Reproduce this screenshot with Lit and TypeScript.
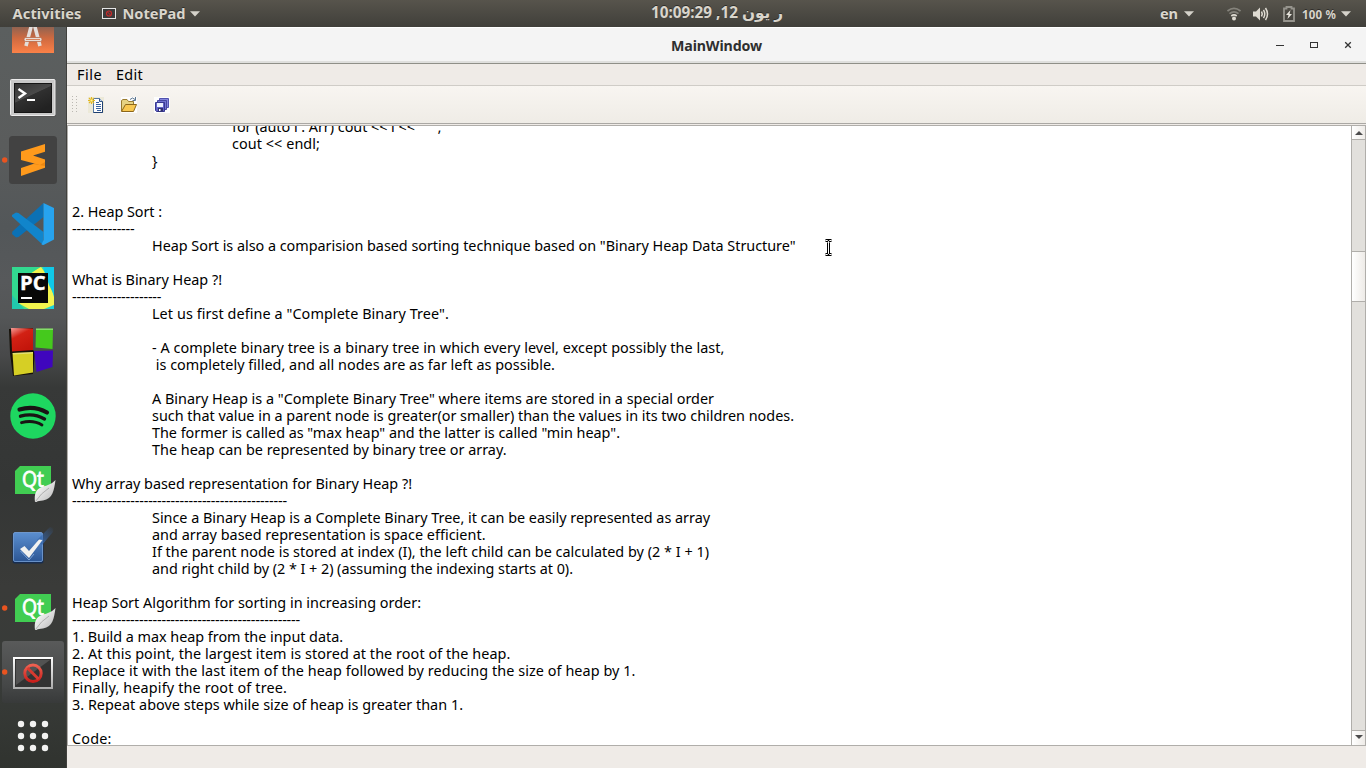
import { LitElement, html, css, svg } from "lit";
import { customElement, property } from "lit/decorators.js";
import { classMap } from "lit/directives/class-map.js";

const ctx = document.createElement("canvas").getContext("2d")!;

/** A single run of text whose tracking is computed so it fills `width` pixels. */
@customElement("fit-text")
class FitText extends LitElement {
  @property() text = "";
  @property({ type: Number }) width = 0;
  @property() font = '14.4px "Noto Sans"';
  static styles = css`
    :host { display: block; white-space: pre; }
    span { display: inline-block; font-family: "Noto Sans", "DejaVu Sans", sans-serif; }
  `;
  render() {
    ctx.font = this.font + ', "DejaVu Sans", sans-serif';
    const natural = ctx.measureText(this.text).width;
    const gap = this.width ? (this.width - natural) / this.text.length : 0;
    return html`<span style="font:${this.font}, 'DejaVu Sans', sans-serif;line-height:inherit;letter-spacing:${gap.toFixed(3)}px">${this.text}</span>`;
  }
}

type Line = [indent: number, text: string, width: number];

const lines: Line[] = [
  [2, 'for (auto i : Arr) cout << i << " " ;', 209.5],
  [2, "cout << endl;", 88],
  [1, "}", 5],
  [0, "", 0],
  [0, "", 0],
  [0, "2. Heap Sort :", 90],
  [0, "-".repeat(14), 62.5],
  [1, 'Heap Sort is also a comparision based sorting technique based on "Binary Heap Data Structure"', 643.5],
  [0, "", 0],
  [0, "What is Binary Heap ?!", 150],
  [0, "-".repeat(20), 89.3],
  [1, 'Let us first define a "Complete Binary Tree".', 297],
  [0, "", 0],
  [1, "- A complete binary tree is a binary tree in which every level, except possibly the last,", 572.5],
  [1, " is completely filled, and all nodes are as far left as possible.", 403],
  [0, "", 0],
  [1, 'A Binary Heap is a "Complete Binary Tree" where items are stored in a special order', 562],
  [1, "such that value in a parent node is greater(or smaller) than the values in its two children nodes.", 642],
  [1, 'The former is called as "max heap" and the latter is called "min heap".', 468],
  [1, "The heap can be represented by binary tree or array.", 354.5],
  [0, "", 0],
  [0, "Why array based representation for Binary Heap ?!", 340],
  [0, "-".repeat(48), 215],
  [1, "Since a Binary Heap is a Complete Binary Tree, it can be easily represented as array", 558],
  [1, "and array based representation is space efficient.", 333.5],
  [1, "If the parent node is stored at index (I), the left child can be calculated by (2 * I + 1)", 557],
  [1, "and right child by (2 * I + 2) (assuming the indexing starts at 0).", 421],
  [0, "", 0],
  [0, "Heap Sort Algorithm for sorting in increasing order:", 349],
  [0, "-".repeat(51), 228],
  [0, "1. Build a max heap from the input data.", 271],
  [0, "2. At this point, the largest item is stored at the root of the heap.", 438.5],
  [0, "Replace it with the last item of the heap followed by reducing the size of heap by 1.", 563.5],
  [0, "Finally, heapify the root of tree.", 215],
  [0, "3. Repeat above steps while size of heap is greater than 1.", 391],
  [0, "", 0],
  [0, "Code:", 39.5],
];

const leaf = svg`
  <path d="M35 53 C34 45 36 40 42 38 C48 36 52 35 55.5 31 C54 41 53 50 43 51.500 C40 52 38 51.500 36.500 53Z" fill="url(#lf)"/>
  <path d="M35.500 52.500 Q41 44 49 39" stroke="#999" stroke-width=".7" fill="none"/>`;
const qt = svg`
  <defs><linearGradient id="lf" x2="1" y2="1"><stop offset=".2" stop-color="#f8f8f8"/><stop offset="1" stop-color="#b5b5b5"/></linearGradient></defs>
  <path d="M20 17H51V45H15V22Z" fill="#41cd52"/>
  <text x="22" y="38" class="qt" textLength="22" lengthAdjust="spacingAndGlyphs">Qt</text>${leaf}`;

const icons = {
  software: svg`
    <defs><linearGradient id="so" x2="0" y2="1"><stop offset=".35" stop-color="#8a6252"/><stop offset=".65" stop-color="#cf6a40"/><stop offset="1" stop-color="#fb8148"/></linearGradient></defs>
    <rect x="12" y="10" width="42" height="42" fill="url(#so)"/>
    <path d="M31.500 24L26 45M34.500 24L40 45" stroke="#e3dedb" stroke-width="3.600"/>
    <rect x="24" y="36.500" width="18" height="4" rx="1.500" fill="#e9dcd5" stroke="#b5694a" stroke-width=".8"/>
    <path d="M26 38.500H40" stroke="#d8835b" stroke-width="1"/>`,
  terminal: svg`
    <defs><linearGradient id="te" x2="0.600" y2="1"><stop stop-color="#343434"/><stop offset=".48" stop-color="#4a4a4a"/><stop offset=".5" stop-color="#303030"/><stop offset="1" stop-color="#222"/></linearGradient></defs>
    <rect x="10" y="14" width="46" height="38" rx="1.500" fill="#555"/>
    <rect x="10.500" y="14.500" width="44.500" height="36" rx="1" fill="#c9c9c9" stroke="#ececec"/>
    <rect x="14" y="18" width="38" height="30" fill="#151515"/>
    <rect x="15" y="19" width="36" height="28" fill="url(#te)"/>
    <path d="M18.500 24L25 28.500L18.500 33" fill="none" stroke="#fff" stroke-width="2.400"/>
    <rect x="27" y="34" width="8" height="2" fill="#fff"/>`,
  sublime: svg`
    <rect x="9" y="7" width="48" height="48" rx="3.500" fill="#424242"/>
    <path d="M21 39L45 31V38.700L21 47Z" fill="#ff9a1c"/>
    <path d="M33 35L45 31V37Z" fill="#ea8712"/>
    <path d="M21 22.500L45 15V22.700L33 26.500L45 30.500V33L40 36L21 31Z" fill="#ff9a1c"/>`,
  vscode: svg`
    <path d="M43.500 10L12.500 38.500L12 41L16 44.500L18.500 44L43.500 24Z" fill="#0b71b5"/>
    <path d="M43 52L12 23.500V22L16 19.500L18.500 20L43.500 39Z" fill="#1185cb"/>
    <path d="M43.500 10L54 15V46.500L43.500 52L41.500 51.500L43.500 47Z" fill="#27a3ee"/>`,
  pycharm: svg`
    <defs><linearGradient id="pc"><stop stop-color="#2fd891"/><stop offset=".6" stop-color="#62e07c"/><stop offset="1" stop-color="#12cfe6"/></linearGradient></defs>
    <rect x="12" y="10" width="42" height="42" fill="url(#pc)"/>
    <path d="M30 16L41 10L48 20L54 40V48L44 52H29L18 46Z" fill="#f2f44d"/>
    <path d="M43 10H54V38L49 28Z" fill="#10c9e8"/>
    <path d="M12 10H40L30 17L18 46L24 52H12Z" fill="#32d990"/>
    <path d="M12 38L24 52H12Z" fill="#21c9ae"/>
    <rect x="18" y="16" width="30" height="30" fill="#080808"/>
    <text x="20" y="33" class="pc" textLength="25.500" lengthAdjust="spacingAndGlyphs">PC</text>
    <rect x="21" y="40" width="11" height="2" fill="#fff"/>`,
  blocks: svg`
    <defs><linearGradient id="rd" x2=".5" y2="1"><stop stop-color="#f6a09a"/><stop offset=".4" stop-color="#d22114"/><stop offset="1" stop-color="#c3150b"/></linearGradient></defs>
    <path d="M9 8L33 7V29L35 31L33 53L13 55L10 32Z" fill="#151008"/>
    <path d="M11 7L33 7.500V29L12 30.500Z" fill="url(#rd)"/>
    <path d="M36 7.500H53L52.500 28L35.500 26.500Z" fill="#45c91d"/>
    <path d="M12.500 32L33 31V51.500L14 54.500Z" fill="#d6cf25"/>
    <path d="M34 30L53 29.500L52.500 46L36.500 51Z" fill="#3f06bd"/>
    <path d="M12.500 32L33 31V32.500L13 33.500ZM36 7.500H53V9H36Z" fill="#fff" opacity=".35"/>`,
  spotify: svg`
    <circle cx="33" cy="31" r="22.700" fill="#1ed760"/>
    <g fill="none" stroke="#191414" stroke-linecap="round">
      <path d="M19.500 24.500Q34 20 47 27.500" stroke-width="4.200"/>
      <path d="M20.500 31.200Q33.500 27.500 44.500 34" stroke-width="3.400"/>
      <path d="M21.500 37.700Q33 34.500 42 40" stroke-width="2.800"/>
    </g>`,
  qt,
  check: svg`
    <defs><linearGradient id="ck" x2="0" y2="1"><stop stop-color="#5b8fd0"/><stop offset="1" stop-color="#2c5694"/></linearGradient>
    <linearGradient id="tl" y1="1" x2="1" y2="0"><stop stop-color="#3567ad"/><stop offset="1" stop-color="#3567ad" stop-opacity="0"/></linearGradient></defs>
    <rect x="12.500" y="19.500" width="31" height="31" rx="2.500" fill="#162c50"/>
    <rect x="13.500" y="19.500" width="29" height="29" rx="1.500" fill="url(#ck)" stroke="#7aa5dc" stroke-width=".8"/>
    <path d="M37 27L50 14L53.500 15L53 19L42 32Z" fill="url(#tl)"/>
    <path d="M20 36L24.500 33L29 38L39 26.500L42.500 27L29 45Z" fill="#f2f2f0"/>
    <path d="M20.500 38L29 47L34 41" fill="none" stroke="#8db3e3" stroke-width=".8"/>`,
  notepad: svg`
    <defs><linearGradient id="hi" x2="0" y2="1"><stop stop-color="#595a5a"/><stop offset=".7" stop-color="#464848"/><stop offset="1" stop-color="#383a3a"/></linearGradient>
    <linearGradient id="fr" x2="0" y2="1"><stop stop-color="#fff"/><stop offset="1" stop-color="#aaa"/></linearGradient>
    <linearGradient id="no" x2="0" y2="1"><stop stop-color="#ef6050"/><stop offset="1" stop-color="#c91f1b"/></linearGradient></defs>
    <rect x="2" y="0" width="62" height="62" rx="3" fill="url(#hi)"/>
    <rect x="13" y="16" width="40" height="32" fill="url(#fr)"/>
    <rect x="15" y="18" width="36" height="28" fill="#333"/>
    <path d="M16 19H50L16 44Z" fill="#525252"/>
    <circle cx="33" cy="32.300" r="8.200" fill="none" stroke="url(#no)" stroke-width="3"/>
    <path d="M27.500 27L38.500 38" stroke="#d93a30" stroke-width="3"/>`,
  grid: svg`${[19, 31, 43].map((y) => [21, 33, 45].map((x) => svg`<circle cx=${x} cy=${y} r="3.200" fill="#f2f2f1"/>`))}`,
};

const dock: [keyof typeof icons, boolean][] = [
  ["software", false], ["terminal", false], ["sublime", true], ["vscode", false],
  ["pycharm", false], ["blocks", false], ["spotify", false], ["qt", false],
  ["check", false], ["qt", true], ["notepad", true], ["grid", false],
];

@customElement("side-dock")
class SideDock extends LitElement {
  static styles = css`
    :host { display: flex; flex-direction: column; width: 67px; overflow: hidden; box-sizing: border-box;
      border-right: 1px solid #41413e;
      background: linear-gradient(#5b5f5f 0, #5a5c5c 120px, #535759 200px, #57595b 255px, #545657 290px, #48494a 328px, #373938 360px, #343635 460px, #3a3b39 560px, #383b38 660px, #30332f 741px); }
    svg { display: block; flex: none; width: 66px; height: 64px; }
    svg:first-child { margin-top: -26px; }
    .qt { font: 21px "Open Sans", sans-serif; fill: #fff; stroke: #fff; stroke-width: .8; }
    .pc { font: bold 20px "Open Sans", sans-serif; fill: #fff; stroke: #fff; stroke-width: .4; }
  `;
  render() {
    return html`${dock.map(([name, running]) => html`
      <svg viewBox="0 0 66 64">${icons[name]}${running ? svg`<circle cx="4.700" cy="31" r="2.700" fill="#e95420"/>` : ""}</svg>`)}`;
  }
}

const caret = html`<svg width="10" height="6" viewBox="0 0 10 6"><path d="M0 .3H10L5 5.500Z" fill="#d5d2ca"/></svg>`;

@customElement("top-bar")
class TopBar extends LitElement {
  static styles = css`
    :host { display: grid; grid-template-columns: 650px 134px 1fr; height: 27px; color: #d9d5cc; overflow: hidden;
      background: linear-gradient(#57544c, #403f3a); text-shadow: 0 -1px #2f2e2a; line-height: 27px; }
    div { display: flex; align-items: center; height: 27px; }
    fit-text { height: 27px; }
    .left { padding-left: 12.500px; }
    .app { margin: 0 7px 0 20px; }
    .name { margin-right: 4px; }
    .clock { justify-content: center; direction: rtl; }
    .time { height: 27px; white-space: nowrap; font: bold 15.300px "Noto Sans", "DejaVu Sans", sans-serif; line-height: 25px; letter-spacing: .1px; }
    .right { justify-content: flex-end; padding-right: 15px; }
    .lang { margin-right: 6px; }
    .wifi { margin: 0 12px 0 33px; }
    .bat { margin: 0 7px 0 14px; }
    .pct { margin-right: 5px; }
  `;
  render() {
    const f = 'bold 14.6px "Noto Sans"';
    return html`
      <div class="left">
        <fit-text text="Activities" width="69" font=${f}></fit-text>
        <svg class="app" width="14" height="11" viewBox="0 0 14 11"><rect x=".5" y=".5" width="13" height="10" fill="#3b3b3b" stroke="#e5e5e5"/><circle cx="7" cy="5.500" r="2.500" fill="none" stroke="#c92a2a" stroke-width="1.200"/><path d="M5.300 3.700L8.700 7.300" stroke="#c92a2a"/></svg>
        <fit-text class="name" text="NotePad" width="63" font=${f}></fit-text>${caret}
      </div>
      <div class="clock"><span class="time">ر يون 12, 10:09:29</span></div>
      <div class="right">
        <fit-text class="lang" text="en" width="18" font=${f}></fit-text>${caret}
        <svg class="wifi" width="14" height="14" viewBox="0 0 14 14" fill="none" stroke-width="1.700"><path d="M.5 4Q7-1.200 13.500 4" stroke="#85837c"/><path d="M2.500 6.600Q7 3 11.500 6.600" stroke="#85837c"/><path d="M4.300 9Q7 6.800 9.700 9" stroke="#dfdbd2"/><circle cx="7" cy="11.500" r="2" fill="#dfdbd2"/></svg>
        <svg width="16" height="14" viewBox="0 0 16 14"><path d="M0 4.500H3L7 .5V13.500L3 9.500H0Z" fill="#dfdbd2"/><g fill="none" stroke="#dfdbd2" stroke-width="1.500"><path d="M8.500 4.500Q10 7 8.500 9.500"/><path d="M10.500 2.800Q13 7 10.500 11.200"/><path d="M12.500 1Q16.500 7 12.500 13"/></g></svg>
        <svg class="bat" width="12" height="16" viewBox="0 0 12 16"><path d="M1 2.500H3.500V1H8.500V2.500H11V15H1Z" fill="none" stroke="#96948d" stroke-width="1.800"/><path d="M7.500 4L3 9H5.500L4.500 13L9 8H6.500Z" fill="#e8e5dd"/></svg>
        <fit-text class="pct" text="100 %" width="34" font='bold 11.5px "Noto Sans"'></fit-text>${caret}
      </div>`;
  }
}

@customElement("app-root")
class AppRoot extends LitElement {
  static styles = css`
    :host { display: grid; grid-template: 27px 741px / 67px 1299px; width: 1366px; height: 768px; overflow: hidden; position: relative; color: #000; }
    top-bar { grid-column: 1 / 3; }
    .win { display: grid; grid-template-rows: 37px 22px 39px 1fr 22px; background: #efebe7; min-height: 0; }
    .title { display: grid; grid-template-columns: 1fr auto; align-items: center; box-sizing: border-box; background: #f4f4f4;
      border-bottom: 1px solid #8f8f88; box-shadow: inset 0 1px #fff, inset 0 -2px #dfdfdd; color: #2f2f2f; line-height: 36px; }
    .caption { padding: 1px 0 0 604px; height: 35px; }
    .buttons { display: flex; align-items: center; gap: 26px; padding-right: 14px; }
    .menu { display: flex; align-items: center; gap: 14px; padding-left: 10px; line-height: 21px; box-sizing: border-box; border-bottom: 1px solid #cfccc7; }
    .tools { display: flex; align-items: center; gap: 17px; padding-left: 5px; box-sizing: border-box;
      background: linear-gradient(#f8f5f1, #efece6); border-bottom: 1px solid #aaa8a4; margin-bottom: 1px; }
    .grip { margin-right: -6px; }
    .editor { display: grid; grid-template-columns: 1fr 15px; min-height: 0; box-sizing: border-box; background: #fff;
      border: solid #b0aeaa; border-width: 1px 0 1px 1px; }
    .page { overflow: hidden; padding-left: 4px; }
    .line { height: 17px; line-height: 17px; }
    .page .line:first-child { margin-top: -8px; }
    .i1 { padding-left: 80px; }
    .i2 { padding-left: 160px; }
    .scroll { display: grid; grid-template-rows: 14px 112px 50px 1fr 14px; border: solid #b0aeaa; border-width: 0 1px; box-sizing: border-box; background: #e2e0dc; }
    .scroll > * { box-sizing: border-box; border-bottom: 1px solid #b0aeaa; }
    .btn { display: grid; place-items: center; background: linear-gradient(90deg, #fff, #eeebe7); }
    .scroll .last { border: 0; padding-bottom: 2px; }
    .cursor { position: absolute; left: 824px; top: 239px; }
  `;
  render() {
    return html`
      <top-bar></top-bar>
      <side-dock></side-dock>
      <main class="win">
        <div class="title">
          <fit-text class="caption" text="MainWindow" width="91" font='bold 14.2px "Noto Sans"'></fit-text>
          <div class="buttons">
            <svg width="8" height="10"><path d="M0 5.500H8" stroke="#333" /></svg>
            <svg width="8" height="10"><rect x=".5" y="2.500" width="7" height="5" fill="none" stroke="#333" /></svg>
            <svg width="8" height="10"><path d="M1.200 2.200L6.800 7.800M6.800 2.200L1.200 7.800" stroke="#333" stroke-width="1.300"/></svg>
          </div>
        </div>
        <div class="menu">
          <fit-text text="File" width="25"></fit-text>
          <fit-text text="Edit" width="27"></fit-text>
        </div>
        <div class="tools">
          <svg class="grip" width="5" height="17">${[0, 3, 6, 9, 12, 15].map((y) => svg`<path d="M0 ${y + 0.5}H1M4 ${y + 0.5}H5" stroke="#bbb8b2"/>`)}</svg>
          <svg width="16" height="16" viewBox="0 0 16 16"><rect width="16" height="16" fill="#ece9d8"/><path d="M5.500 1.500H11.500L14.500 4.500V15.500H5.500Z" fill="#fff" stroke="#5578a5"/><path d="M14.500 4.500V15.500H5.500" fill="none" stroke="#1e3f70"/><path d="M11.500 1.500V4.500H14.500" fill="#c8d8ee" stroke="#345988"/><path d="M8 5.500H11M8 7.500H13M8 9.500H13M8 11.500H13M9 13.500H13" stroke="#3b63a0"/><path d="M3.500 0V7M0 3.500H7M1 1L6 6M6 1L1 6" stroke="#e4b820" stroke-width="1.100"/><rect x="2.500" y="2.500" width="2" height="2" fill="#fff59a"/></svg>
          <svg width="16" height="16" viewBox="0 0 16 16"><rect width="16" height="16" fill="#fdfdfd"/><path d="M.5 14V3.500L2 2.500H6L7.500 4.500H12.500V7" fill="#e6d282" stroke="#9a7b2d"/><path d="M.5 14.500L4.500 7.500H15.500L12.500 14.500Z" fill="#f8c850" stroke="#8c661a"/><path d="M9 2.500Q11.500-.5 14 2.500M14.500 0V3.500H11.500" fill="none" stroke="#5b7590"/></svg>
          <svg width="16" height="16" viewBox="0 0 16 16"><rect width="16" height="16" fill="#fdfdfd"/><path d="M5.500 1.500H14.500V10.500H5.500Z" fill="#8586dc" stroke="#5152ae"/><path d="M3.500 3.500H12.500V12.500H3.500Z" fill="#7273d0" stroke="#4647a0"/><path d="M1.500 5.500H10.500V14.500H2.500L1.500 13.500Z" fill="#6263c8" stroke="#38398f"/><rect x="3" y="6" width="6" height="4" fill="#edf2ff"/><rect x="4" y="11" width="5" height="3.500" fill="#303070"/><rect x="5" y="12" width="1.500" height="2" fill="#fff"/></svg>
        </div>
        <div class="editor">
          <div class="page">
            ${lines.map(([indent, text, width]) => html`<div class=${classMap({ line: true, i1: indent === 1, i2: indent === 2 })}>${text ? html`<fit-text .text=${text} .width=${width}></fit-text>` : ""}</div>`)}
          </div>
          <div class="scroll">
            <div class="btn"><svg width="8" height="4"><path d="M0 4L4 0L8 4Z" fill="#4c4c4c"/></svg></div>
            <div></div>
            <div class="btn"></div>
            <div></div>
            <div class="btn last"><svg width="8" height="4"><path d="M0 0H8L4 4Z" fill="#4c4c4c"/></svg></div>
          </div>
        </div>
        <div></div>
      </main>
      <svg class="cursor" width="9" height="17" viewBox="0 0 9 17"><path d="M1.500 1.500H3.500L4.500 2.500L5.500 1.500H7.500M4.500 2.500V14.500M1.500 15.500H3.500L4.500 14.500L5.500 15.500H7.500" fill="none" stroke="#000" stroke-width="3"/><path d="M1.500 1.500H3.500L4.500 2.500L5.500 1.500H7.500M4.500 2.500V14.500M1.500 15.500H3.500L4.500 14.500L5.500 15.500H7.500" fill="none" stroke="#fff" stroke-width="1"/></svg>`;
  }
}
